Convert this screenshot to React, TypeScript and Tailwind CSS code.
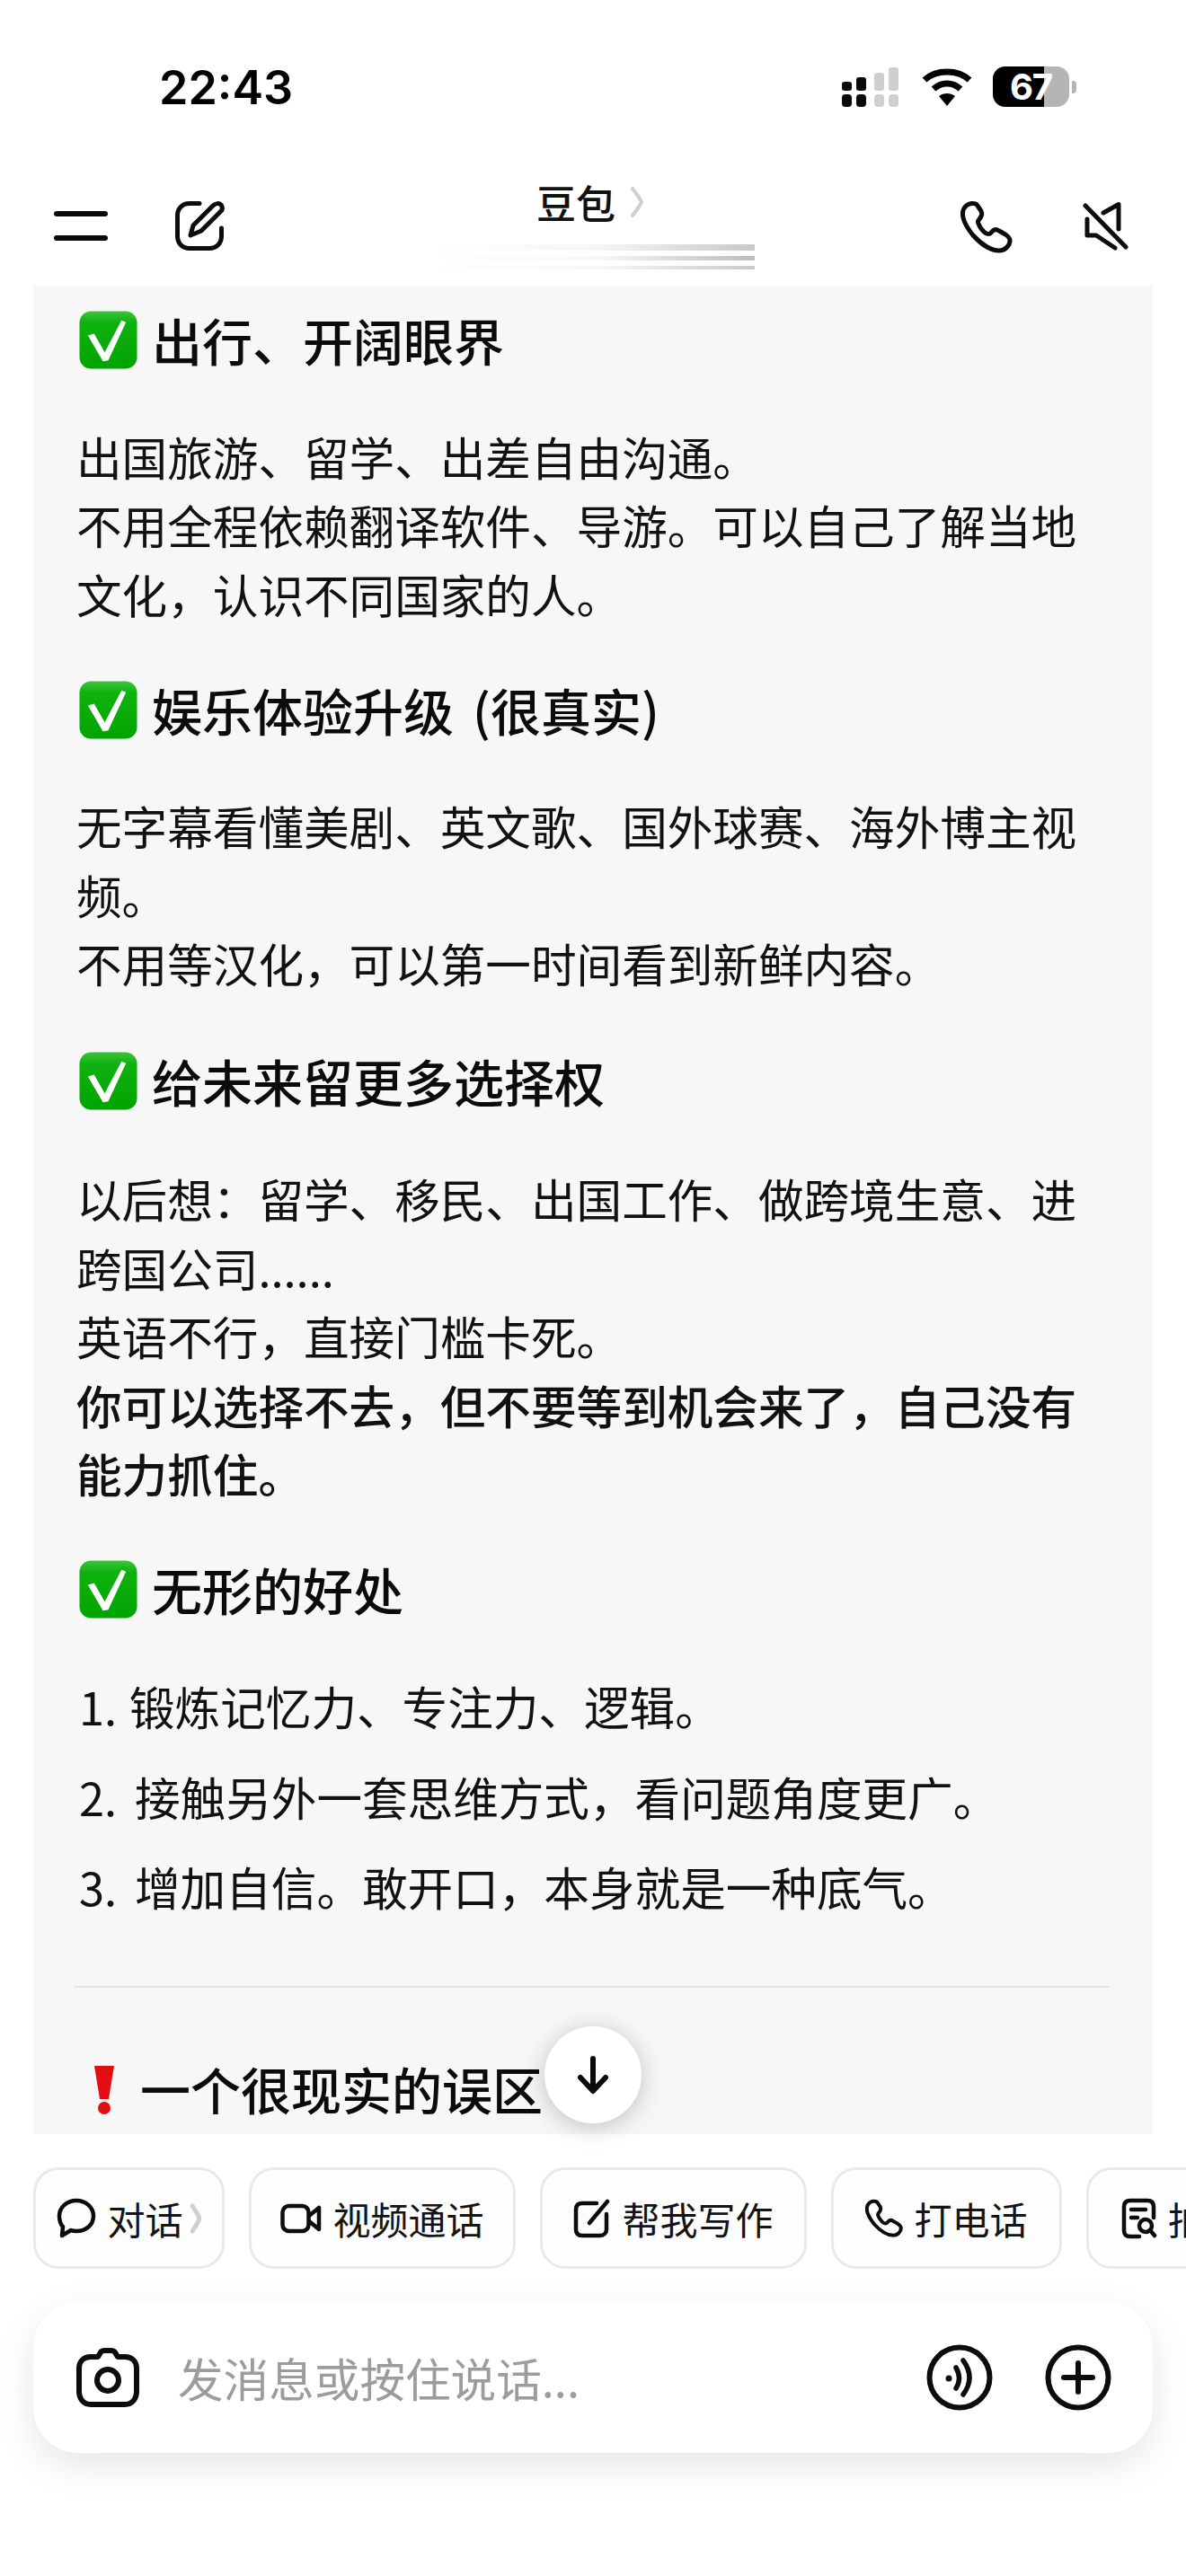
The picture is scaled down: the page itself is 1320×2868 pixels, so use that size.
import React from "react";

const CJK = { fontFamily: '"Noto Sans CJK SC", "Noto Sans", sans-serif' };
const COMMA = "\uFF0C";
const COLON = "\uFF1A";

function Check() {
  return (
    <svg width="65" height="65" viewBox="0 0 66 66" className="shrink-0 ml-[3px]">
      <defs>
        <linearGradient id="g" x1="0" y1="0" x2="0" y2="1">
          <stop offset="0" stopColor="#3cc43c" />
          <stop offset="0.2" stopColor="#0fb10f" />
          <stop offset="1" stopColor="#00a400" />
        </linearGradient>
      </defs>
      <rect x="0.5" y="0.5" width="65" height="65" rx="13" fill="url(#g)" />
      <path d="M10 28 L17 26 L29 47 L48 11 L53 13 L33 56 L27 57 Z" fill="#fff" />
    </svg>
  );
}

function Heading({ children }: { children: React.ReactNode }) {
  return (
    <div className="flex items-center gap-[16px] h-[66px] text-[56px] font-medium leading-[66px] text-[#0b0b0b]">
      <Check />
      <span>{children}</span>
    </div>
  );
}

function Chip({ w, icon, children, left }: { w: string; icon: React.ReactNode; children: React.ReactNode; left?: boolean }) {
  return (
    <div className={`${w} ${left ? "justify-start pl-[36px]" : "justify-center"} h-[113px] shrink-0 flex items-center gap-[12px] rounded-[28px] border-[3px] border-[#e9e9e9] bg-[#fdfdfd] text-[42px] text-[#141414]`}>
      {icon}
      {children}
    </div>
  );
}

const ic = { fill: "none", stroke: "#0c0c0c", strokeLinecap: "round", strokeLinejoin: "round" } as const;

const PHONE = "M14 2.5 C9 2 3 6 2.5 13 C2 19 6 28 14 38 C24 49 35 55 43 55 C50 55 55 49 55 44 C55 41 53 39 50 37 L43 33 C40 31 38 31 36 33 L33 36 C31 37 29 37 26 34 C23 31 21 28 20 25 C19 23 20 21 21 20 L23 17 C24 15 24 13 23 11 L19 5 C18 3 16 2.5 14 2.5 Z";

export default function App() {
  return (
    <div lang="zh-CN" style={CJK} className="relative w-[1320px] h-[2868px] bg-white overflow-hidden flex flex-col">
      {/* status bar */}
      <div className="h-[190px] shrink-0 flex items-start justify-between pt-[67px] pl-[177px] pr-[122px]">
        <div className="text-[52px] leading-[62px] font-semibold text-black" style={{ fontFamily: "Inter, sans-serif" }}>22:43</div>
        <div className="flex items-center gap-[22px] mt-[7px]">
          <svg width="66" height="44" viewBox="0 0 66 44">
            <g fill="#0a0a0a">
              <rect x="0" y="16" width="11" height="10" rx="3" />
              <rect x="16" y="11" width="11" height="15" rx="3" />
              <rect x="0" y="30" width="11" height="14" rx="4" />
              <rect x="16" y="30" width="11" height="14" rx="4" />
            </g>
            <g fill="#cfcfcf">
              <rect x="36" y="6" width="11" height="20" rx="3" />
              <rect x="52" y="0" width="11" height="26" rx="3" />
              <rect x="36" y="30" width="11" height="14" rx="4" />
              <rect x="52" y="30" width="11" height="14" rx="4" />
            </g>
          </svg>
          <svg width="58" height="44" viewBox="0 0 58 44" fill="none" stroke="#000" strokeWidth="7">
            <path d="M4 14 C17 2 41 2 54 14" />
            <path d="M14 24 C23 16 35 16 44 24" />
            <path d="M29 43 L20 32 C25 28 33 28 38 32 Z" fill="#000" stroke="none" />
          </svg>
          <div className="relative w-[93px] h-[45px] flex items-center">
            <div className="w-[85px] h-[45px] rounded-[14px] overflow-hidden bg-[#b5b5b5]">
              <div className="w-[57px] h-full bg-black" />
            </div>
            <div className="absolute left-0 top-0 w-[85px] h-[45px] flex items-center justify-center text-[40px] tracking-[-1px] font-bold text-white leading-none" style={{ fontFamily: "Inter, sans-serif" }}>67</div>
            <div className="w-[5px] h-[14px] rounded-r-[4px] bg-[#b5b5b5] ml-[3px]" />
          </div>
        </div>
      </div>

      {/* nav bar */}
      <div className="relative h-[128px] shrink-0 flex items-start justify-between pl-[60px] pr-[64px] pt-[34px]">
        <div className="flex items-start gap-[74px]">
          <div className="flex flex-col justify-between w-[60px] h-[33px] mt-[11px]">
            <div className="h-[6px] rounded-full bg-[#0a0a0a]" />
            <div className="h-[6px] rounded-full bg-[#0a0a0a]" />
          </div>
          <svg width="58" height="56" viewBox="-1 0 58 56" {...ic} strokeWidth="5">
            <path d="M27 2.5 H16 C8 2.5 2.5 8 2.5 16 V39 C2.5 47 8 52.5 16 52.5 H38 C46 52.5 51.5 47 51.5 39 V30" />
            <path d="M17 38 L20 27 L42 5 C45 2 49 2 51 4 C53 7 53 9 51 11 L29 33 Z" />
          </svg>
        </div>
        <div className="absolute left-[490px] top-[15px] w-[350px] flex flex-col items-center">
          <div className="flex items-center gap-[16px] h-[40px] ml-[36px] self-start pl-[71px]">
            <span className="text-[44px] leading-[40px] font-medium text-[#111]">豆包</span>
            <svg width="16" height="34" viewBox="0 0 16 34" fill="none" stroke="#cfcfcf" strokeWidth="4" strokeLinecap="round">
              <path d="M3 2 C9 10 12 14 13 17 C12 20 9 24 3 32" />
            </svg>
          </div>
          <div className="mt-[27px] w-full flex flex-col gap-[6px]">
            <div className="h-[7px] w-full bg-gradient-to-r from-[#fefefe] via-[#f6f6f6] to-[#c9c9c9]" />
            <div className="h-[5px] w-full bg-gradient-to-r from-[#fefefe] via-[#f8f8f8] to-[#bdbdbd]" />
            <div className="h-[4px] w-full bg-gradient-to-r from-[#fefefe] via-[#f8f8f8] to-[#c9c9c9]" />
          </div>
        </div>
        <div className="flex items-start gap-[77px]">
          <svg width="58" height="58" viewBox="0 0 58 58" {...ic} strokeWidth="5">
            <path d={PHONE} />
          </svg>
          <svg width="52" height="56" viewBox="-1 0 52 56" {...ic} strokeWidth="5">
            <path d="M3 5 L48 51" />
            <path d="M23 13 L40 3.5 V31 M5 20 V38 H15 L36 52" />
          </svg>
        </div>
      </div>

      {/* message panel */}
      <div className="relative mx-[37px] h-[2058px] shrink-0 overflow-hidden bg-[#f7f7f7] pt-[27px] pl-[48px] pr-[48px] text-[50.6px] leading-[76.4px] text-[#111]">
        <Heading>出行、开阔眼界</Heading>
        <p className="mt-[59px]">出国旅游、留学、出差自由沟通。<br />{`不用全程依赖翻译软件、导游。可以自己了解当地文化${COMMA}认识不同国家的人。`}</p>
        <div className="mt-[58px]"><Heading><span className="mr-[21px]">娱乐体验升级</span>{"(很真实)"}</Heading></div>
        <p className="mt-[58px]">无字幕看懂美剧、英文歌、国外球赛、海外博主视频。<br />{`不用等汉化${COMMA}可以第一时间看到新鲜内容。`}</p>
        <div className="mt-[60px]"><Heading>给未来留更多选择权</Heading></div>
        <p className="mt-[60px]">{`以后想${COLON}留学、移民、出国工作、做跨境生意、进跨国公司......`}<br />{`英语不行${COMMA}直接门槛卡死。`}<br /><span className="font-medium">{`你可以选择不去${COMMA}但不要等到机会来了${COMMA}自己没有能力抓住。`}</span></p>
        <div className="mt-[58px]"><Heading>无形的好处</Heading></div>
        <div className="mt-[59px] flex flex-col gap-[24px] pl-[3px]">
          <div className="flex"><span className="w-[56px] shrink-0">1.</span><span>锻炼记忆力、专注力、逻辑。</span></div>
          <div className="flex"><span className="w-[62px] shrink-0">2.</span><span>{`接触另外一套思维方式${COMMA}看问题角度更广。`}</span></div>
          <div className="flex"><span className="w-[62px] shrink-0">3.</span><span>{`增加自信。敢开口${COMMA}本身就是一种底气。`}</span></div>
        </div>
        <div className="mt-[72px] -ml-[2px] h-[2px] bg-[#e3e3e3]" />
        <div className="mt-[80px] flex items-center gap-[28px] h-[66px] pl-[19px] text-[56px] font-medium text-[#0b0b0b]">
          <svg width="24" height="56" viewBox="0 0 24 56" className="shrink-0">
            <path d="M1 2 H23 L17 39 H7 Z" fill="#e20f12" />
            <circle cx="12" cy="49" r="7" fill="#e20f12" />
          </svg>
          <span>一个很现实的误区</span>
        </div>
      </div>

      {/* scroll down */}
      <div className="absolute left-[606px] top-[2256px] w-[108px] h-[108px] rounded-full bg-white shadow-[0_4px_28px_rgba(0,0,0,0.22)] flex items-center justify-center">
        <svg width="38" height="44" viewBox="0 0 38 44" {...ic} strokeWidth="6">
          <path d="M19 4 V39 M5 25 L19 40 L33 25" />
        </svg>
      </div>

      {/* chips */}
      <div className="mt-[37px] h-[113px] shrink-0 pl-[37px] flex gap-[27px] overflow-hidden">
        <Chip w="w-[213px]" icon={
          <svg width="44" height="46" viewBox="0 0 44 46" {...ic} strokeWidth="4.5">
            <path d="M22 3 C33 3 41 11 41 20 C41 30 33 37 22 37 C20 37 18 37 16 36 L6 42 L7 32 C4 29 3 25 3 20 C3 11 11 3 22 3 Z" />
          </svg>
        }>
          <span className="flex items-center gap-[8px]">对话
            <svg width="12" height="34" viewBox="0 0 12 34" fill="none" stroke="#cfcfcf" strokeWidth="5" strokeLinecap="round">
              <path d="M2 3 C7 10 9 14 10 17 C9 20 7 24 2 31" />
            </svg>
          </span>
        </Chip>
        <Chip w="w-[297px]" icon={
          <svg width="46" height="34" viewBox="0 0 46 34" {...ic} strokeWidth="4.5">
            <rect x="2.5" y="3" width="29" height="28" rx="7" />
            <path d="M32 14 L43 5 V29 L32 20" />
          </svg>
        }>视频通话</Chip>
        <Chip w="w-[297px]" icon={
          <svg width="42" height="44" viewBox="0 0 42 44" {...ic} strokeWidth="4.5">
            <path d="M26 5 H10 C5 5 3 8 3 12 V34 C3 38 5 41 10 41 H30 C34 41 37 38 37 34 V17" />
            <path d="M18 27 L38 3" />
          </svg>
        }>帮我写作</Chip>
        <Chip w="w-[257px]" icon={
          <svg width="42" height="44" viewBox="0 0 58 58" {...ic} strokeWidth="5.5">
            <path d={PHONE} />
          </svg>
        }>打电话</Chip>
        <Chip w="w-[300px]" left icon={
          <svg width="40" height="46" viewBox="0 0 40 46" {...ic} strokeWidth="4.5" className="shrink-0">
            <path d="M36 22 V10 C36 5 33 3 29 3 H10 C5 3 3 6 3 10 V36 C3 41 5 43 10 43 H20" />
            <path d="M11 13 H27 M11 22 H18" />
            <circle cx="27" cy="31" r="7" />
            <path d="M32 36 L37 42" />
          </svg>
        }>拍题答疑</Chip>
      </div>

      {/* input */}
      <div className="mt-[37px] mx-[37px] h-[168px] shrink-0 rounded-[50px] bg-white shadow-[0_14px_44px_rgba(0,0,0,0.1)] flex items-center pl-[48px] pr-[46px]">
        <svg width="70" height="66" viewBox="0 0 70 66" {...ic} strokeWidth="6" className="shrink-0">
          <path d="M24 10 L27 5 C28 3 30 3 32 3 H38 C40 3 42 3 43 5 L46 10 H54 C62 10 67 15 67 23 V48 C67 57 62 63 54 63 H16 C8 63 3 57 3 48 V23 C3 15 8 10 16 10 Z" />
          <circle cx="35" cy="36" r="12" />
        </svg>
        <div className="ml-[43px] flex-1 text-[50.6px] leading-[76px] text-[#9c9c9c]">发消息或按住说话...</div>
        <svg width="74" height="74" viewBox="0 0 74 74" {...ic} strokeWidth="6" className="shrink-0">
          <circle cx="37" cy="37" r="33.5" />
          <path d="M33 26 Q40 38 33 49 M41 18 Q55 37 41 56" strokeWidth="5.5" />
          <circle cx="25" cy="38" r="3.5" fill="#0c0c0c" stroke="none" />
        </svg>
        <svg width="74" height="74" viewBox="0 0 74 74" {...ic} strokeWidth="6" className="ml-[58px] shrink-0">
          <circle cx="37" cy="37" r="33.5" />
          <path d="M37 21 V53 M21 37 H53" />
        </svg>
      </div>
    </div>
  );
}
